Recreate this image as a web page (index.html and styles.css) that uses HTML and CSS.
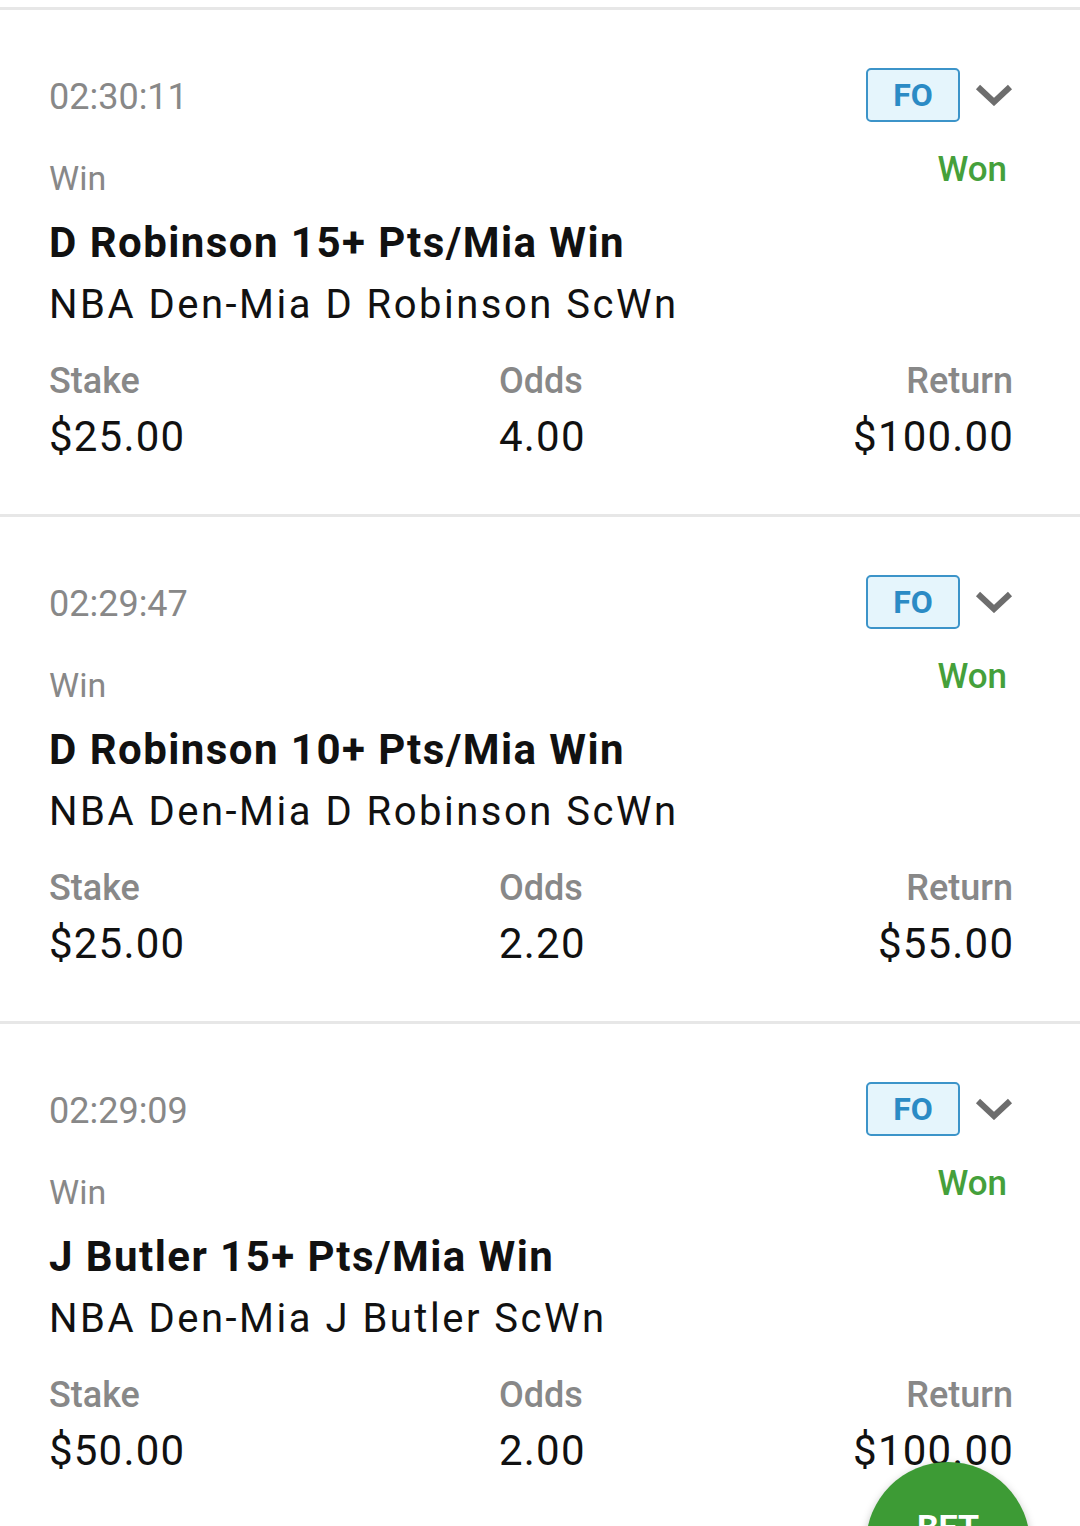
FILE: index.html
```html
<!DOCTYPE html>
<html lang="en">
<head>
    <meta charset="UTF-8">
    <meta name="viewport" content="width=device-width, initial-scale=1.0">
    <title>My Bets</title>
    <link rel="stylesheet" href="styles.css">
</head>
<body>

    <div class="bet-list">

        <div class="bet-card">
            <div class="bet-head">
                <span class="bet-time">02:30:11</span>
                <div class="bet-tools">
                    <span class="badge">FO</span>
                    <svg class="chevron" width="38" height="22" viewBox="0 0 38 22"><path d="M3 3 L19 18 L35 3" /></svg>
                </div>
            </div>
            <div class="bet-type">
                <span class="type-label">Win</span>
                <span class="status">Won</span>
            </div>
            <div class="bet-title">D Robinson 15+ Pts/Mia Win</div>
            <div class="bet-market">NBA Den-Mia D Robinson ScWn</div>
            <div class="bet-stats">
                <div class="stat">
                    <span class="stat-label">Stake</span>
                    <span class="stat-value">$25.00</span>
                </div>
                <div class="stat">
                    <span class="stat-label">Odds</span>
                    <span class="stat-value">4.00</span>
                </div>
                <div class="stat right">
                    <span class="stat-label">Return</span>
                    <span class="stat-value">$100.00</span>
                </div>
            </div>
        </div>

        <div class="bet-card">
            <div class="bet-head">
                <span class="bet-time">02:29:47</span>
                <div class="bet-tools">
                    <span class="badge">FO</span>
                    <svg class="chevron" width="38" height="22" viewBox="0 0 38 22"><path d="M3 3 L19 18 L35 3" /></svg>
                </div>
            </div>
            <div class="bet-type">
                <span class="type-label">Win</span>
                <span class="status">Won</span>
            </div>
            <div class="bet-title">D Robinson 10+ Pts/Mia Win</div>
            <div class="bet-market">NBA Den-Mia D Robinson ScWn</div>
            <div class="bet-stats">
                <div class="stat">
                    <span class="stat-label">Stake</span>
                    <span class="stat-value">$25.00</span>
                </div>
                <div class="stat">
                    <span class="stat-label">Odds</span>
                    <span class="stat-value">2.20</span>
                </div>
                <div class="stat right">
                    <span class="stat-label">Return</span>
                    <span class="stat-value">$55.00</span>
                </div>
            </div>
        </div>

        <div class="bet-card">
            <div class="bet-head">
                <span class="bet-time">02:29:09</span>
                <div class="bet-tools">
                    <span class="badge">FO</span>
                    <svg class="chevron" width="38" height="22" viewBox="0 0 38 22"><path d="M3 3 L19 18 L35 3" /></svg>
                </div>
            </div>
            <div class="bet-type">
                <span class="type-label">Win</span>
                <span class="status">Won</span>
            </div>
            <div class="bet-title">J Butler 15+ Pts/Mia Win</div>
            <div class="bet-market">NBA Den-Mia J Butler ScWn</div>
            <div class="bet-stats">
                <div class="stat">
                    <span class="stat-label">Stake</span>
                    <span class="stat-value">$50.00</span>
                </div>
                <div class="stat">
                    <span class="stat-label">Odds</span>
                    <span class="stat-value">2.00</span>
                </div>
                <div class="stat right">
                    <span class="stat-label">Return</span>
                    <span class="stat-value">$100.00</span>
                </div>
            </div>
        </div>

    </div>

    <!-- floating bet button, partly off screen -->
    <div class="fab">BET</div>

</body>
</html>
```

FILE: styles.css
```css
body {
    margin: 0;
    font-family: Roboto, "Liberation Sans", sans-serif;
    background-color: #fff;
    color: #111;
    overflow: hidden;
}
.bet-list {
    padding-top: 7px;
}
.bet-card {
    border-top: 3px solid #e7e7e7;
    padding: 58px 67px 51px 49px;
}
.bet-head {
    display: flex;
    justify-content: space-between;
    align-items: center;
    height: 54px;
}
.bet-time {
    font-size: 36px;
    color: #888;
    padding-top: 4px;
}
.bet-tools {
    display: flex;
    align-items: center;
    gap: 15px;
}
.badge {
    box-sizing: border-box;
    width: 94px;
    height: 54px;
    border: 2px solid #3c94c9;
    border-radius: 5px;
    background-color: #e5f5fc;
    color: #2b8bc5;
    font-size: 32px;
    font-weight: 700;
    display: flex;
    align-items: center;
    justify-content: center;
}
.chevron path {
    fill: none;
    stroke: #6d6d6d;
    stroke-width: 6;
}
.bet-type {
    display: flex;
    justify-content: space-between;
    align-items: flex-start;
    margin-top: 36px;
}
.type-label {
    font-size: 34px;
    line-height: 40px;
    color: #888;
}
.status {
    font-size: 35px;
    line-height: 24px;
    font-weight: 500;
    color: #45a03b;
    margin-right: 6px;
}
.bet-title {
    margin-top: 14px;
    font-size: 42px;
    line-height: 62px;
    font-weight: 700;
    letter-spacing: 1.45px;
}
.bet-market {
    font-size: 40px;
    line-height: 62px;
    letter-spacing: 2.5px;
}
.bet-stats {
    display: grid;
    grid-template-columns: 450px 1fr auto;
    margin-top: 23px;
}
.stat {
    display: flex;
    flex-direction: column;
    gap: 8px;
}
.stat.right {
    text-align: right;
}
.stat-label {
    font-size: 36px;
    line-height: 44px;
    font-weight: 500;
    color: #888;
}
.stat-value {
    font-size: 42px;
    line-height: 52px;
    letter-spacing: 1.2px;
}
.stat.right .stat-value {
    margin-right: -1.2px;
}
.fab {
    position: absolute;
    left: 866px;
    top: 1462px;
    width: 164px;
    height: 164px;
    border-radius: 50%;
    background-color: #3d9b35;
    box-shadow: 0 3px 8px rgba(0, 0, 0, 0.25);
    color: #fff;
    font-size: 34px;
    font-weight: 700;
    text-align: center;
    line-height: 34px;
    padding-top: 48px;
    box-sizing: border-box;
}
```
